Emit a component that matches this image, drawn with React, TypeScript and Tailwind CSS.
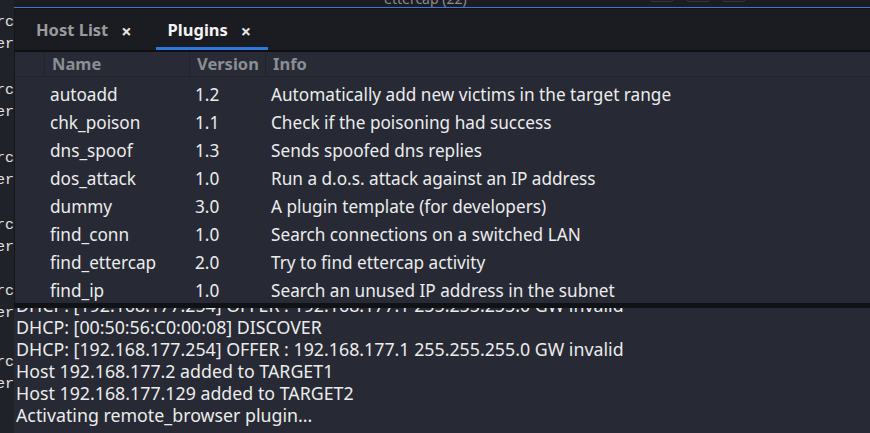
import React from 'react';

const plugins = [
    { name: 'autoadd', version: '1.2', info: 'Automatically add new victims in the target range' },
    { name: 'chk_poison', version: '1.1', info: 'Check if the poisoning had success' },
    { name: 'dns_spoof', version: '1.3', info: 'Sends spoofed dns replies' },
    { name: 'dos_attack', version: '1.0', info: 'Run a d.o.s. attack against an IP address' },
    { name: 'dummy', version: '3.0', info: 'A plugin template (for developers)' },
    { name: 'find_conn', version: '1.0', info: 'Search connections on a switched LAN' },
    { name: 'find_ettercap', version: '2.0', info: 'Try to find ettercap activity' },
    { name: 'find_ip', version: '1.0', info: 'Search an unused IP address in the subnet' },
];

const logLines = [
    'DHCP: [192.168.177.254] OFFER : 192.168.177.1 255.255.255.0 GW invalid',
    'DHCP: [00:50:56:C0:00:08] DISCOVER',
    'DHCP: [192.168.177.254] OFFER : 192.168.177.1 255.255.255.0 GW invalid',
    'Host 192.168.177.2 added to TARGET1',
    'Host 192.168.177.129 added to TARGET2',
    'Activating remote_browser plugin...',
];

// fragments of the terminal window peeking out on the left
const sideLines = [
    { t: 'rc', mt: 'mt-[12px]' },
    { t: 'er', mt: 'mt-0' },
    { t: 'rc', mt: 'mt-[24px]' },
    { t: 'er', mt: 'mt-0' },
    { t: 'rc', mt: 'mt-[24px]' },
    { t: 'er', mt: 'mt-0' },
    { t: 'rc', mt: 'mt-[23px]' },
    { t: 'er', mt: 'mt-0' },
    { t: 'rc', mt: 'mt-[22px]' },
    { t: 'er', mt: 'mt-0' },
    { t: 'rc', mt: 'mt-[27px]' },
    { t: 'er', mt: 'mt-0' },
];

const Tab = ({ label, active }: { label: string; active?: boolean }) => (
    <div className={`relative flex h-full items-center gap-[13px] pl-[12px] pr-[17px] pt-[2px] text-[16.5px] ${active ? 'text-[#f2f2f2]' : 'text-[#9a9b9e]'}`}>
        <span className="font-bold">{label}</span>
        <span className="text-[18px] font-bold leading-none text-[#e6e6e6]">×</span>
        {active && <div className="absolute bottom-0 left-0 right-0 h-[3px] bg-[#2f78e0]" />}
    </div>
);

export default function App() {
    return (
        <div className="flex h-[433px] w-[870px] overflow-hidden bg-[#272a34] text-[#ececec]" style={{ fontFamily: '"Noto Sans", "Open Sans", sans-serif' }}>
            {/* left sliver of background terminal */}
            <div className="flex w-[14px] shrink-0 flex-col items-end overflow-hidden bg-[#20222a] text-[15px] leading-[22px] text-[#e0e0e0]" style={{ fontFamily: '"Liberation Mono", "DejaVu Sans Mono", monospace' }}>
                {sideLines.map((l, i) => (
                    <div key={i} className={`${l.mt} whitespace-nowrap`}>{l.t}</div>
                ))}
            </div>

            <div className="flex min-w-0 flex-1 flex-col">
                {/* title strip of the window behind */}
                <div className="relative h-[7px] shrink-0 overflow-hidden bg-[#1c1d22]">
                    <div className="absolute left-[370px] top-[-12px] text-[14px] text-[#8a8b8f]">ettercap (22)</div>
                    <div className="absolute left-[636px] top-[-6px] h-[8px] w-[24px] rounded-[3px] border border-[#34363d]" />
                    <div className="absolute left-[672px] top-[-6px] h-[8px] w-[24px] rounded-[3px] border border-[#34363d]" />
                    <div className="absolute left-[708px] top-[-6px] h-[8px] w-[24px] rounded-[3px] border border-[#34363d]" />
                </div>
                <div className="h-[1px] shrink-0 bg-[#3a7ad6]" />

                {/* plugins dialog */}
                <div className="flex shrink-0 flex-col border-l border-[#15161a]">
                    <div className="flex h-[42px] items-stretch gap-[7px] border-t border-[#121317] bg-[#1b1c21] pl-[9px]">
                        <Tab label="Host List" />
                        <Tab label="Plugins" active />
                    </div>
                    <div className="h-[2px] bg-[#0f1013]" />
                    <div className="flex h-[25px] items-center border-b border-[#22242c] bg-[#282b36] text-[16.5px] font-bold text-[#8b8e94]">
                        <div className="h-full w-[30px] border-r border-[#22242c]" />
                        <div className="flex h-full w-[145px] items-center border-r border-[#22242c] pl-[7px]">Name</div>
                        <div className="flex h-full w-[76px] items-center border-r border-[#22242c] pl-[7px]">Version</div>
                        <div className="pl-[7px]">Info</div>
                    </div>
                    <div className="h-[226px] overflow-hidden bg-[#272a35] pt-[4px] text-[17.2px]">
                        {plugins.map((p) => (
                            <div key={p.name} className="flex h-[28px] items-center whitespace-nowrap">
                                <div className="w-[30px]" />
                                <div className="w-[145px] pl-[5px]">{p.name}</div>
                                <div className="w-[76px] pl-[5px]">{p.version}</div>
                                <div className="pl-[5px]">{p.info}</div>
                            </div>
                        ))}
                    </div>
                </div>
                <div className="h-[5px] shrink-0 bg-[#111216]" />

                {/* log console */}
                <div className="flex-1 overflow-hidden bg-[#272a34] pl-[2px] text-[17.8px] leading-[22px]">
                    <div className="mt-[-14px]">
                        {logLines.map((l, i) => (
                            <div key={i} className="whitespace-nowrap">{l}</div>
                        ))}
                    </div>
                </div>
            </div>
        </div>
    );
}
